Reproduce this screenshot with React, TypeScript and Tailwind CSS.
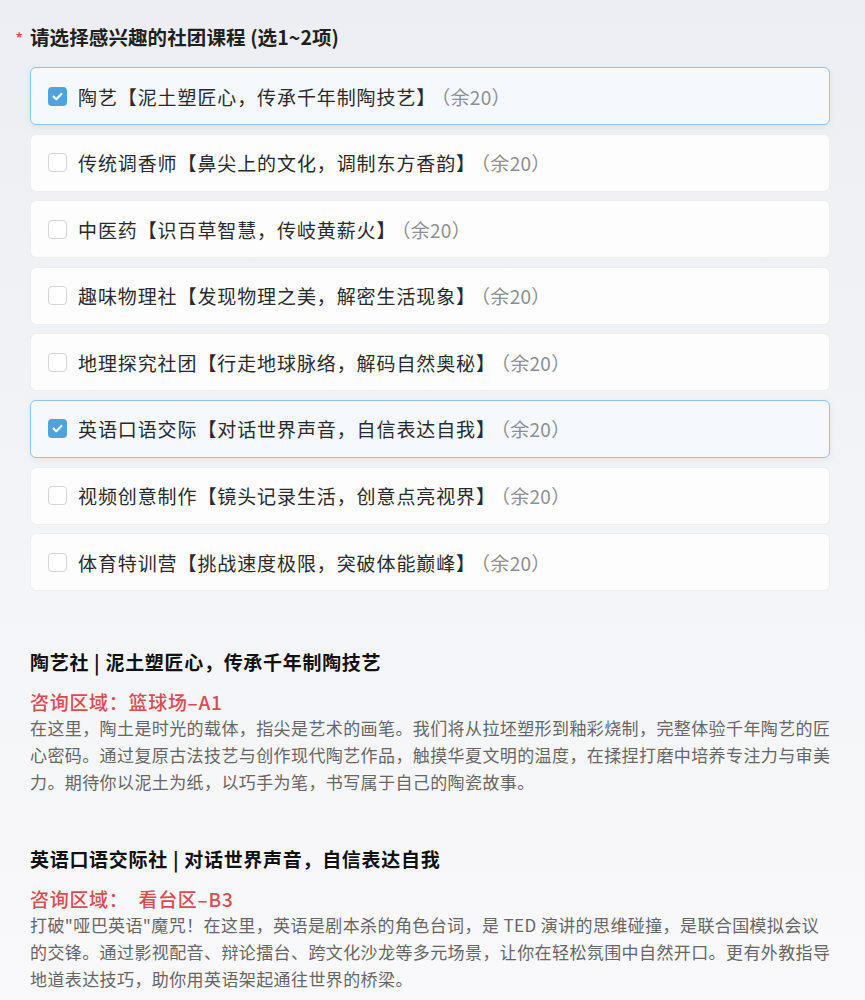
const options = [
    { id: 1, name: "陶艺", desc: "【泥土塑匠心，传承千年制陶技艺】", checked: true },
    { id: 2, name: "传统调香师", desc: "【鼻尖上的文化，调制东方香韵】", checked: false },
    { id: 3, name: "中医药", desc: "【识百草智慧，传岐黄薪火】", checked: false },
    { id: 4, name: "趣味物理社", desc: "【发现物理之美，解密生活现象】", checked: false },
    { id: 5, name: "地理探究社团", desc: "【行走地球脉络，解码自然奥秘】", checked: false },
    { id: 6, name: "英语口语交际", desc: "【对话世界声音，自信表达自我】", checked: true },
    { id: 7, name: "视频创意制作", desc: "【镜头记录生活，创意点亮视界】", checked: false },
    { id: 8, name: "体育特训营", desc: "【挑战速度极限，突破体能巅峰】", checked: false },
];

const clubs = [
    {
        id: 1,
        title: "陶艺社 | 泥土塑匠心，传承千年制陶技艺",
        area: "咨询区域：篮球场–A1",
        body: "在这里，陶土是时光的载体，指尖是艺术的画笔。我们将从拉坯塑形到釉彩烧制，完整体验千年陶艺的匠心密码。通过复原古法技艺与创作现代陶艺作品，触摸华夏文明的温度，在揉捏打磨中培养专注力与审美力。期待你以泥土为纸，以巧手为笔，书写属于自己的陶瓷故事。",
    },
    {
        id: 2,
        title: "英语口语交际社 | 对话世界声音，自信表达自我",
        area: "咨询区域：  看台区–B3",
        body: "打破\"哑巴英语\"魔咒！在这里，英语是剧本杀的角色台词，是 TED 演讲的思维碰撞，是联合国模拟会议的交锋。通过影视配音、辩论擂台、跨文化沙龙等多元场景，让你在轻松氛围中自然开口。更有外教指导地道表达技巧，助你用英语架起通往世界的桥梁。",
    },
];

const Check = ({ checked }: { checked: boolean }) =>
    checked ? (
        <span className="flex h-[19px] w-[19px] shrink-0 items-center justify-center rounded-[4px] bg-[#4fa3dc]">
            <svg width="13" height="13" viewBox="0 0 12 12" fill="none">
                <path d="M2.4 6.1 L4.9 8.5 L9.6 3.7" stroke="white" strokeWidth="2" strokeLinecap="round" strokeLinejoin="round" />
            </svg>
        </span>
    ) : (
        <span className="h-[19px] w-[19px] shrink-0 rounded-[4px] border border-[#d4d4d9] bg-white" />
    );

export default function App() {
    return (
        <div
            className="min-h-[1000px] bg-gradient-to-b from-[#eceef3] via-[#f3f4f7] to-[#f9f9fb] px-[30px] pt-[24px] text-[#222] [text-spacing-trim:space-all]"
            style={{ fontFamily: '"Noto Sans CJK SC", "Noto Sans", sans-serif' }}
        >
            {/* question title */}
            <div className="relative flex h-[26px] items-center text-[19.5px] font-bold leading-[26px] tracking-[0.1px] text-[#1f1f1f]">
                <span className="absolute -left-[15px] top-[1px] text-[18px] font-normal text-[#e5484d]">*</span>
                请选择感兴趣的社团课程 (选1~2项)
            </div>

            {/* options */}
            <div className="mt-[17px] flex w-[800px] flex-col gap-[8.6px]">
                {options.map((o) => (
                    <div
                        key={o.id}
                        className={`flex h-[58px] items-center gap-[11px] rounded-[6px] border px-[17px] ${
                            o.checked
                                ? "border-[#8fc5e7] bg-[#f5f9fd] shadow-[0_2px_6px_rgba(120,140,170,0.12)]"
                                : "border-[#eeeef2] bg-[#fdfdfe]"
                        }`}
                    >
                        <Check checked={o.checked} />
                        <span className="text-[19px] leading-none tracking-[0.9px] text-[#2a2a2a]">
                            {o.name}
                            {o.desc}
                            <span className="-ml-[5px] tracking-[0.3px] text-[#8e8e93]">（余20）</span>
                        </span>
                    </div>
                ))}
            </div>

            {/* club descriptions */}
            <div className="mt-[58px] flex w-[805px] flex-col gap-[51px]">
                {clubs.map((c) => (
                    <div key={c.id}>
                        <div className="text-[19px] font-bold leading-[26px] tracking-[0.7px] text-[#111]">{c.title}</div>
                        <div className="mt-[14px] whitespace-pre text-[19px] font-medium leading-[26px] tracking-[0.7px] text-[#dc4b52]">{c.area}</div>
                        <p className="mt-[0px] text-[17px] leading-[26.7px] tracking-[0.4px] text-[#666]">{c.body}</p>
                    </div>
                ))}
            </div>
        </div>
    );
}
